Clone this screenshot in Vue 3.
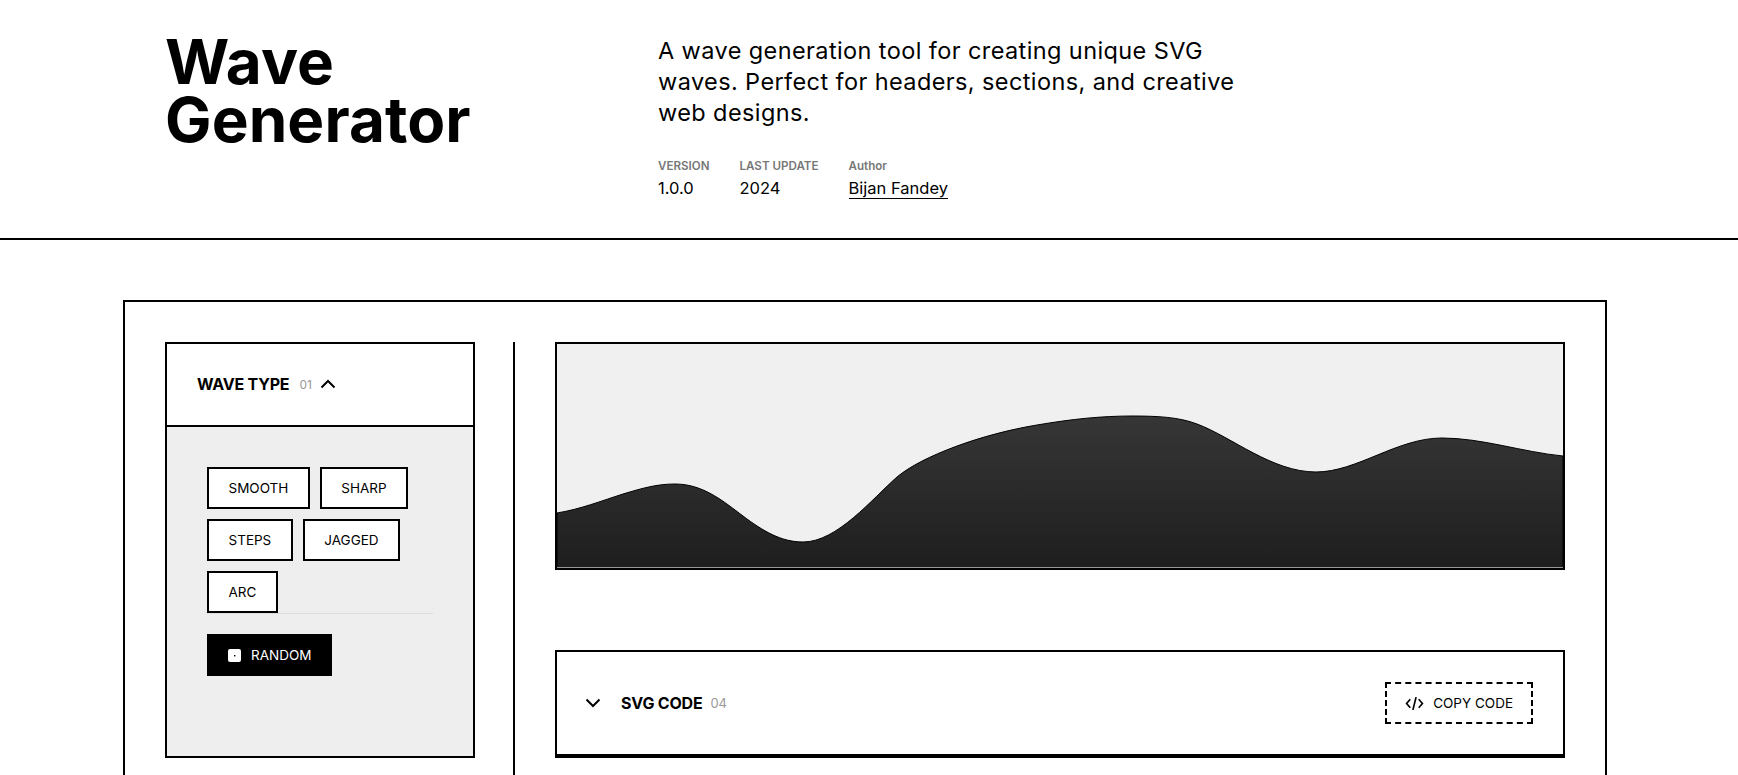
<template>
  <div class="page">
    <header class="top">
      <h1 class="title">Wave<br />Generator</h1>
      <div class="intro">
        <p class="lead">A wave generation tool for creating unique SVG waves. Perfect for headers, sections, and creative web designs.</p>
        <dl class="meta">
          <div v-for="item in meta" :key="item.label">
            <dt>{{ item.label }}</dt>
            <dd :class="{ link: item.link }">{{ item.value }}</dd>
          </div>
        </dl>
      </div>
    </header>

    <main class="frame">
      <aside class="side">
        <section class="panel">
          <div class="panel-head">
            <span class="head-title">WAVE TYPE</span>
            <span class="head-num">01</span>
            <svg class="chev" width="16" height="10" viewBox="0 0 16 10" fill="none" stroke="#000" stroke-width="2">
              <path d="M1.500 8.500 8 2l6.500 6.500" />
            </svg>
          </div>
          <div class="panel-body">
            <div class="types">
              <button v-for="t in types" :key="t" class="type-btn">{{ t }}</button>
            </div>
            <button class="random">
              <svg width="13" height="13" viewBox="0 0 13 13">
                <rect width="13" height="13" rx="2" fill="#fff" />
                <rect x="6" y="6" width="1.400" height="1.400" fill="#000" />
              </svg>
              RANDOM
            </button>
          </div>
        </section>
      </aside>

      <div class="content">
        <div class="preview">
          <svg class="wave" viewBox="0 0 1006 223" preserveAspectRatio="none">
            <defs>
              <linearGradient id="waveFill" x1="0" y1="0" x2="0" y2="1">
                <stop offset="0" stop-color="#363636" />
                <stop offset="1" stop-color="#1e1e1e" />
              </linearGradient>
            </defs>
            <path
              d="M0 169C24 165 44 157 66 150C86 144 100 140 118 140C146 140 166 157 186 172C206 187 224 198 246 198C280 198 315 155 340 133C365 112 425 90 480 81C515 75 545 72 575 72C600 72 622 73 640 80C675 93 715 128 759 128C800 128 840 94 885 94C925 94 965 108 1006 112V224H0Z"
              fill="url(#waveFill)"
              stroke="#000"
              stroke-width="1"
            />
          </svg>
        </div>

        <section class="code">
          <div class="code-left">
            <svg class="chev" width="16" height="10" viewBox="0 0 16 10" fill="none" stroke="#000" stroke-width="2">
              <path d="M1.500 1.500 8 8l6.500-6.500" />
            </svg>
            <span class="head-title">SVG CODE</span>
            <span class="head-num wide">04</span>
          </div>
          <button class="copy">
            <svg width="19" height="15" viewBox="0 0 18 14" fill="none" stroke="#000" stroke-width="1.600">
              <path d="M5 3 1.500 7 5 11M13 3l3.500 4L13 11M10.500 1 7.500 13" />
            </svg>
            COPY CODE
          </button>
        </section>
      </div>
    </main>
  </div>
</template>

<script setup>
const meta = [
  { label: 'VERSION', value: '1.0.0' },
  { label: 'LAST UPDATE', value: '2024' },
  { label: 'Author', value: 'Bijan Fandey', link: true }
]

const types = ['SMOOTH', 'SHARP', 'STEPS', 'JAGGED', 'ARC']
</script>

<style>
html,
body {
  margin: 0;
  overflow: hidden;
  background: #fff;
}
</style>

<style scoped>
.page {
  font-family: Inter, "Liberation Sans", sans-serif;
  color: #000;
  width: 1738px;
}

.top {
  display: flex;
  height: 238px;
  border-bottom: 2px solid #000;
  padding-left: 165px;
}

.title {
  width: 493px;
  margin: 33px 0 0;
  font-size: 62px;
  line-height: 58px;
  font-weight: 700;
  letter-spacing: 0.1px;
}

.lead {
  width: 590px;
  margin: 35px 0 0;
  font-size: 23.500px;
  line-height: 31px;
  font-weight: 400;
  letter-spacing: 0.4px;
}

.meta {
  display: flex;
  gap: 30px;
  margin: 29px 0 0;
}

.meta dt {
  font-size: 11.600px;
  line-height: 18px;
  font-weight: 600;
  color: #777;
}

.meta dd {
  margin: 3px 0 0;
  font-size: 16.500px;
  line-height: 20px;
}

.meta dd.link {
  border-bottom: 1px solid #000;
}

.frame {
  display: flex;
  gap: 40px;
  box-sizing: border-box;
  width: 1484px;
  min-height: 540px;
  margin: 60px 0 0 123px;
  padding: 40px;
  border: 2px solid #000;
}

.side {
  flex: 0 0 350px;
  box-sizing: border-box;
  padding-right: 38px;
  border-right: 2px solid #000;
}

.panel {
  border: 2px solid #000;
}

.panel-head {
  display: flex;
  align-items: center;
  box-sizing: border-box;
  height: 83px;
  padding: 0 0 1px 30px;
  border-bottom: 2px solid #000;
}

.head-title {
  font-size: 16px;
  font-weight: 700;
  letter-spacing: -0.2px;
}

.head-num {
  margin-left: 10px;
  font-size: 12px;
  color: #999;
}

.head-num.wide {
  margin-left: 8px;
  font-size: 13px;
}

.panel-head .chev {
  margin-left: 8px;
}

.panel-body {
  padding: 40px 40px 80px;
  background: #eee;
}

.types {
  display: flex;
  flex-wrap: wrap;
  gap: 10px;
  border-bottom: 1px solid #ddd;
}

.type-btn {
  height: 42px;
  box-sizing: border-box;
  padding: 0 19.500px;
  border: 2px solid #000;
  background: #fff;
  font: 400 13.500px Inter, sans-serif;
  color: #000;
}

.random {
  display: flex;
  align-items: center;
  gap: 10px;
  height: 42px;
  margin-top: 20px;
  padding: 0 21px;
  border: 0;
  background: #000;
  color: #fff;
  font: 400 13.500px Inter, sans-serif;
}

.content {
  flex: 1;
  min-width: 0;
}

.preview {
  height: 228px;
  box-sizing: border-box;
  border: 2px solid #000;
  background: #f0f0f0;
}

.wave {
  display: block;
  box-sizing: border-box;
  width: 100%;
  height: 224px;
  border-bottom: 1px solid #999;
}

.code {
  display: flex;
  align-items: center;
  justify-content: space-between;
  margin-top: 80px;
  padding: 30px 30px 30px 28px;
  border: 2px solid #000;
  border-bottom-width: 4px;
}

.code-left {
  display: flex;
  align-items: center;
}

.code-left .head-title {
  margin-left: 20px;
}

.copy {
  display: flex;
  align-items: center;
  gap: 9px;
  height: 42px;
  box-sizing: border-box;
  padding: 0 18px;
  border: 2px dashed #000;
  background: #fff;
  font: 400 13.500px Inter, sans-serif;
  color: #000;
}
</style>
